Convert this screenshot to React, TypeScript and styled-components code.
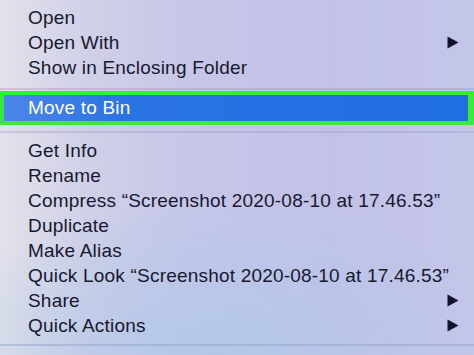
import styled, { createGlobalStyle } from 'styled-components'

const GlobalStyle = createGlobalStyle`
  html, body {
    margin: 0;
    padding: 0;
    width: 474px;
    height: 355px;
    overflow: hidden;
  }
`

type Entry = { label: string; submenu?: boolean }

const topGroup: Entry[] = [
  { label: 'Open' },
  { label: 'Open With', submenu: true },
  { label: 'Show in Enclosing Folder' },
]

const bottomGroup: Entry[] = [
  { label: 'Get Info' },
  { label: 'Rename' },
  { label: 'Compress \u201cScreenshot 2020-08-10 at 17.46.53\u201d' },
  { label: 'Duplicate' },
  { label: 'Make Alias' },
  { label: 'Quick Look \u201cScreenshot 2020-08-10 at 17.46.53\u201d' },
  { label: 'Share', submenu: true },
  { label: 'Quick Actions', submenu: true },
]

function Arrow() {
  return (
    <svg width="12" height="13" viewBox="0 0 12 13">
      <path d="M0.5 0.5 L11.5 6.5 L0.5 12.5 Z" fill="#12122c" />
    </svg>
  )
}

function MenuRow({ entry }: { entry: Entry }) {
  return (
    <Row>
      <Label>{entry.label}</Label>
      {entry.submenu && <Arrow />}
    </Row>
  )
}

export default function App() {
  return (
    <>
      <GlobalStyle />
      <Menu>
        {topGroup.map((e) => (
          <MenuRow key={e.label} entry={e} />
        ))}
        <Separator />
        <Highlight>
          <Row $selected>
            <Label>Move to Bin</Label>
          </Row>
        </Highlight>
        <Separator $after />
        {bottomGroup.map((e) => (
          <MenuRow key={e.label} entry={e} />
        ))}
        <Separator $bottom />
      </Menu>
    </>
  )
}

const Menu = styled.div`
  width: 474px;
  height: 355px;
  box-sizing: border-box;
  padding-top: 5px;
  display: flex;
  flex-direction: column;
  font-family: 'Liberation Sans', Arial, sans-serif;
  font-size: 19px;
  color: #18182f;
  background:
    radial-gradient(ellipse 60% 45% at 45% 100%, rgba(176, 200, 232, 0.9), rgba(176, 200, 232, 0) 100%),
    linear-gradient(90deg, #e2e2ea 0%, #d0d0e8 18%, #c6c6e8 40%, #c2c2e8 70%, #c4c6e8 100%);
`

const Row = styled.div<{ $selected?: boolean }>`
  height: 25px;
  display: flex;
  align-items: center;
  justify-content: space-between;
  padding: 0 15px 0 28px;
  color: ${(p) => (p.$selected ? '#ffffff' : 'inherit')};
`

const Label = styled.span`
  white-space: nowrap;
  letter-spacing: 0.2px;
`

const Separator = styled.div<{ $after?: boolean; $bottom?: boolean }>`
  height: ${(p) => (p.$after ? '13px' : p.$bottom ? '8px' : '10px')};
  display: flex;
  align-items: ${(p) => (p.$after ? 'center' : 'flex-end')};
  padding-bottom: ${(p) => (p.$after || p.$bottom ? '0' : '1px')};
  &::after {
    content: '';
    flex: 1;
    height: 2px;
    background: ${(p) => (p.$bottom ? 'rgba(140, 160, 200, 0.45)' : 'rgba(150, 150, 190, 0.35)')};
  }
`

const Highlight = styled.div`
  height: 34px;
  box-sizing: border-box;
  border: 4px solid #36ee36;
  border-right-width: 6px;
  background: linear-gradient(90deg, #4d86ea 0%, #2a74e4 25%, #1f6ee2 100%);
  display: flex;
  align-items: center;
  & > div {
    flex: 1;
    padding-left: 24px;
  }
`
